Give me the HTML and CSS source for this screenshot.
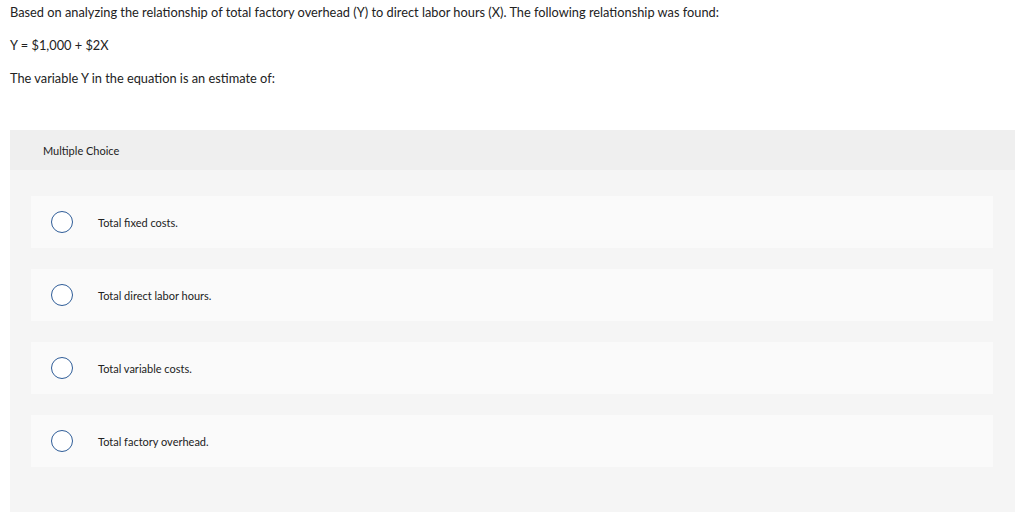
FILE: index.html
```html
<!DOCTYPE html>
<html>
<head>
<meta charset="utf-8">
<link rel="stylesheet" href="styles.css">
</head>
<body>
<div class="page">
  <div class="question">
    <p>Based on analyzing the relationship of total factory overhead (Y) to direct labor hours (X). The following relationship was found:</p>
    <p>Y = $1,000 + $2X</p>
    <p>The variable Y in the equation is an estimate of:</p>
  </div>
  <div class="panel">
    <div class="panel-head">Multiple Choice</div>
    <div class="panel-body">
      <div class="choice"><span class="radio"></span><span class="label">Total fixed costs.</span></div>
      <div class="choice"><span class="radio"></span><span class="label">Total direct labor hours.</span></div>
      <div class="choice"><span class="radio"></span><span class="label">Total variable costs.</span></div>
      <div class="choice"><span class="radio"></span><span class="label">Total factory overhead.</span></div>
    </div>
  </div>
</div>
</body>
</html>
```
FILE: styles.css
```css
html, body { margin: 0; padding: 0; background: #fff; }
body { font-family: Lato, "Open Sans", sans-serif; color: #222; }
.page { padding: 2px 9px 0 10px; }
.question p { margin: 0 0 13px 0; font-size: 12.8px; line-height: 20px; }
.question { margin-bottom: 42px; }
.panel { background: #f5f5f5; height: 382px; display: flex; flex-direction: column; }
.panel-head { background: #efefef; height: 40px; display: flex; align-items: center; padding-left: 33px; font-size: 11px; color: #222; }
.panel-body { padding: 26px 22px 0 21px; display: flex; flex-direction: column; gap: 21px; }
.choice { background: #fafafa; height: 52px; display: flex; align-items: center; padding-left: 20px; }
.radio { width: 20px; height: 20px; border: 1px solid #2f5d98; border-radius: 50%; background: #fff; flex: none; }
.label { margin-left: 25px; font-size: 11px; color: #222; }
```
